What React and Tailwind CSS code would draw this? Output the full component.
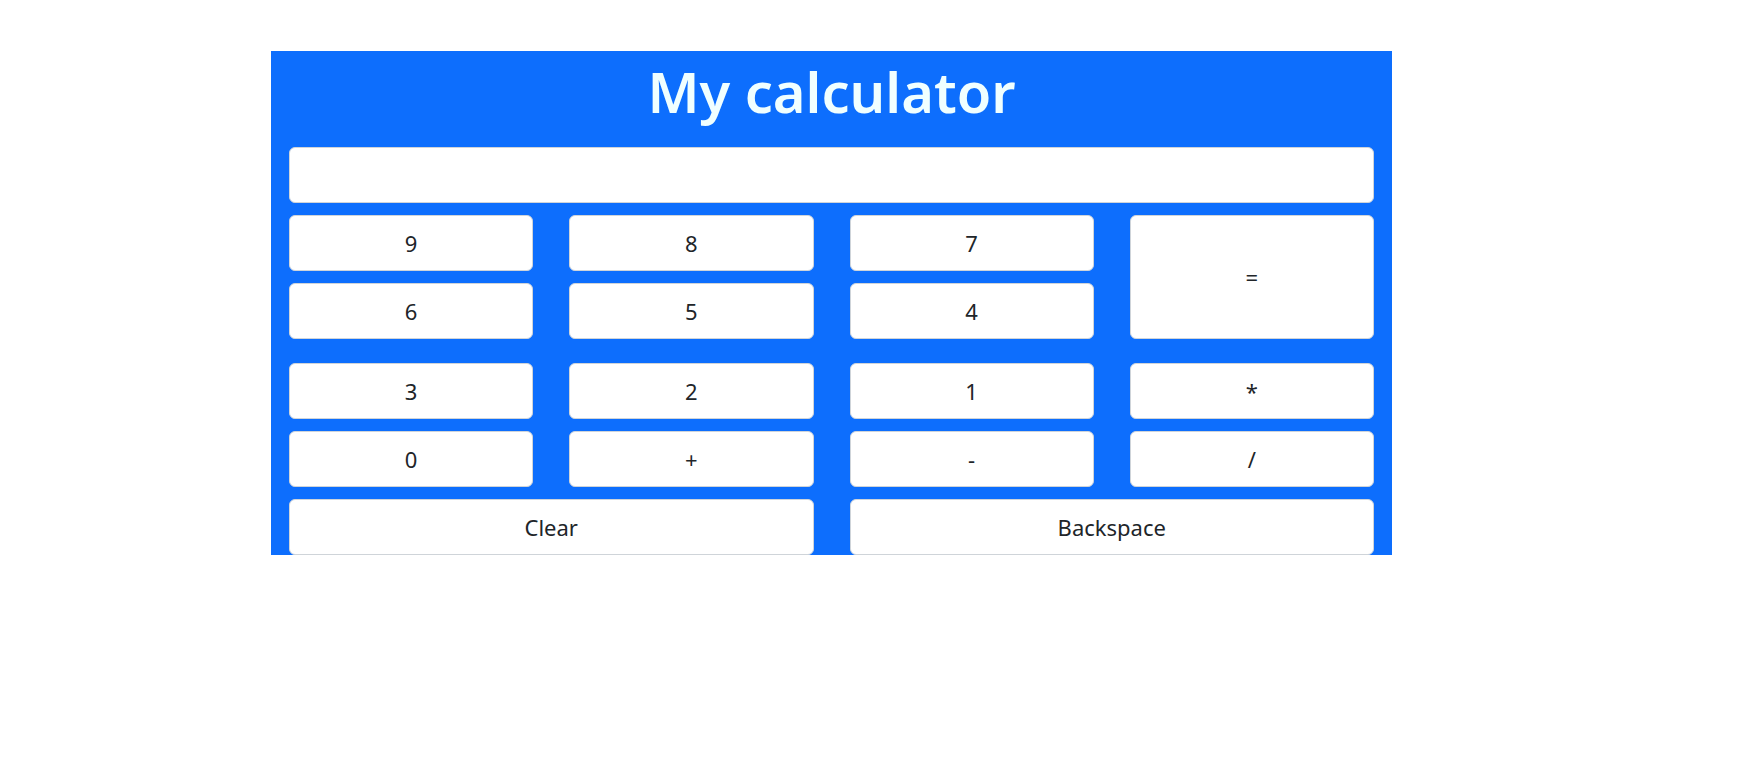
import React from "react";

const btn =
  "h-[56px] w-full flex items-center justify-center bg-white border border-[#cfd4d9] rounded-[6px] text-[22px] text-[#212529]";

export default function App() {
  const font = { fontFamily: '"Noto Sans", "Open Sans", sans-serif' };
  return (
    <div className="w-[1742px] h-[782px] bg-white" style={font}>
      <div className="pt-[51px] pl-[271px]">
        <div className="w-[1121px] bg-[#0d6efd] px-[18px]">
          <div className="h-[96px] flex justify-center items-start pt-[7px]">
            <h1 className="text-[56px] font-semibold leading-[1.2] text-[#f0ffff]">My calculator</h1>
          </div>
          <div className="h-[56px] bg-white border border-[#cfd4d9] rounded-[6px]"></div>
          <div className="mt-[12px] grid grid-cols-4 gap-x-[36px] gap-y-[12px]">
            <button className={btn}>9</button>
            <button className={btn}>8</button>
            <button className={btn}>7</button>
            <button className="row-span-2 w-full flex items-center justify-center bg-white border border-[#cfd4d9] rounded-[6px] text-[22px] text-[#212529]">=</button>
            <button className={btn}>6</button>
            <button className={btn}>5</button>
            <button className={btn}>4</button>
          </div>
          <div className="mt-[24px] grid grid-cols-4 gap-x-[36px] gap-y-[12px]">
            <button className={btn}>3</button>
            <button className={btn}>2</button>
            <button className={btn}>1</button>
            <button className={btn}>*</button>
            <button className={btn}>0</button>
            <button className={btn}>+</button>
            <button className={btn}>-</button>
            <button className={btn}>/</button>
          </div>
          <div className="mt-[12px] grid grid-cols-2 gap-x-[36px]">
            <button className={btn}>Clear</button>
            <button className={btn}>Backspace</button>
          </div>
        </div>
      </div>
    </div>
  );
}
